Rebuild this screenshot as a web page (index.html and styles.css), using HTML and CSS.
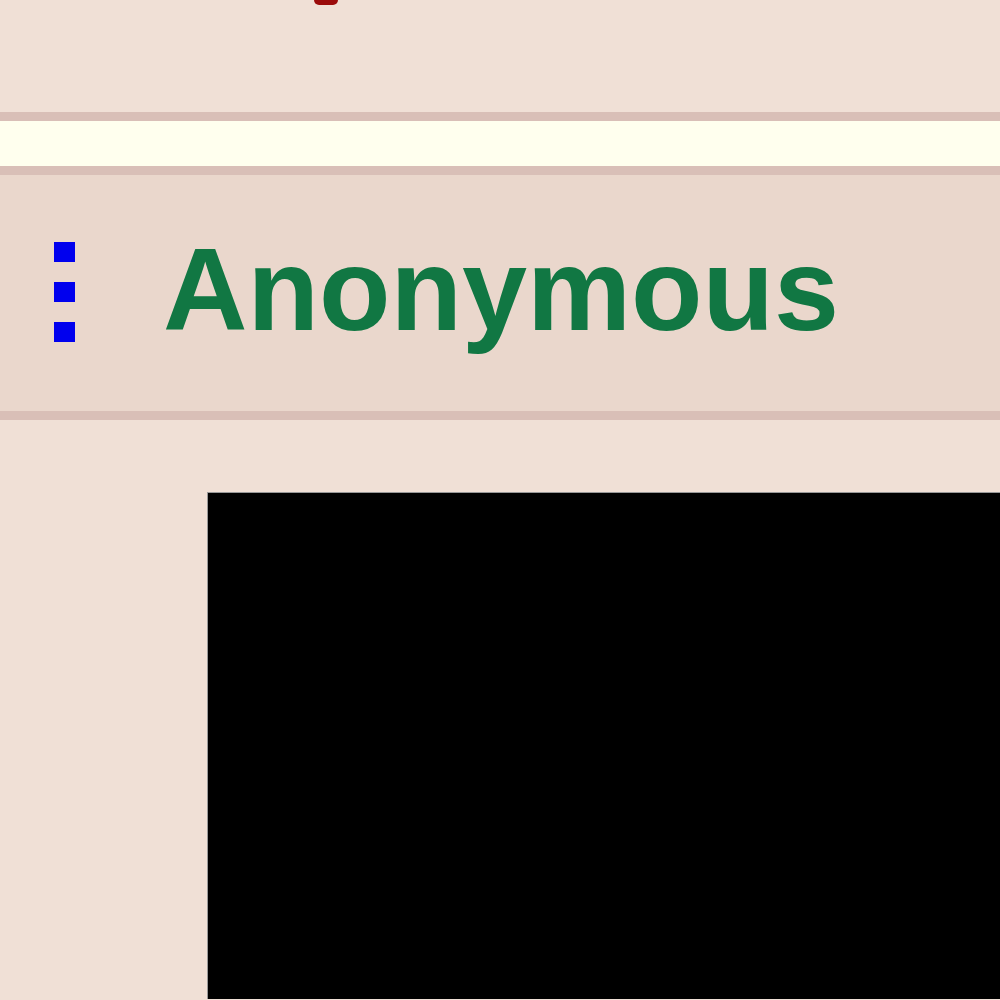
FILE: index.html
```html
<!DOCTYPE html>
<html>
<head>
<meta charset="utf-8">
<link rel="stylesheet" href="styles.css">
</head>
<body>
<div class="top"><div class="subject-tail"></div></div>
<div class="band"></div>
<div class="post-head">
  <div class="menu"><span class="dot"></span><span class="dot"></span><span class="dot"></span></div>
  <span class="name">Anonymous</span>
</div>
<div class="post-body">
  <div class="file-thumb"></div>
</div>
</body>
</html>
```
FILE: styles.css
```css
html, body {
  margin: 0;
  padding: 0;
  width: 1000px;
  height: 1000px;
  overflow: hidden;
  background: #f0e0d6;
  font-family: "Liberation Sans", Arial, sans-serif;
}
.top {
  height: 112px;
}
.subject-tail {
  margin-left: 314px;
  width: 24px;
  height: 5px;
  background: #9b0b0b;
  border-radius: 0 0 12px 12px;
}
.band {
  height: 45px;
  background: #ffffee;
  border-top: 9px solid #d9bfb7;
  border-bottom: 9px solid #d9bfb7;
}
.post-head {
  height: 236px;
  background: #ead7cc;
  border-bottom: 9px solid #d9bfb7;
  display: flex;
  align-items: flex-start;
}
.menu {
  margin-left: 54px;
  margin-top: 67px;
  width: 21px;
  display: flex;
  flex-direction: column;
  gap: 20px;
}
.dot {
  display: block;
  width: 21px;
  height: 20px;
  background: #0000ee;
}
.name {
  margin-left: 88px;
  margin-top: 56px;
  font-size: 117px;
  line-height: 1;
  font-weight: bold;
  color: #117743;
}
.post-body {
  padding-top: 72px;
  padding-left: 207px;
}
.file-thumb {
  width: 792px;
  height: 506px;
  background: #000;
  border-top: 1px solid #999;
  border-left: 1px solid #999;
}
```
